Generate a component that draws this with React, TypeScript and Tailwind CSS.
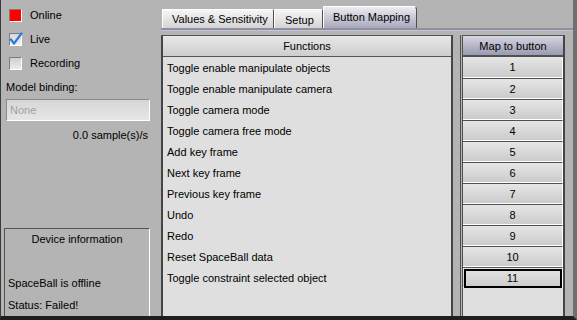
import React from "react";

const functions = [
  "Toggle enable manipulate objects",
  "Toggle enable manipulate camera",
  "Toggle camera mode",
  "Toggle camera free mode",
  "Add key frame",
  "Next key frame",
  "Previous key frame",
  "Undo",
  "Redo",
  "Reset SpaceBall data",
  "Toggle constraint selected object",
];

function Box({ children, className }: { children?: React.ReactNode; className: string }) {
  return (
    <div
      className={
        "w-[13px] h-[13px] shrink-0 border-t border-l border-t-[#7c7c7c] border-l-[#7c7c7c] border-b border-r border-b-white border-r-white flex items-center justify-center " +
        className
      }
    >
      {children}
    </div>
  );
}

export default function App() {
  return (
    <div className="w-[577px] h-[320px] bg-[#b4b4b4] flex border-l border-l-[#3a3a3a] border-b-[4px] border-b-[#1e1e1e] border-r-[4px] border-r-[#707070] font-['Liberation_Sans',Arial,sans-serif] text-[11px] text-black leading-[14px] overflow-hidden">
      {/* Left column */}
      <div className="w-[160px] shrink-0 flex flex-col">
        <div className="mt-[8px] h-[14px] flex items-center pl-[8px] gap-[8px]">
          <Box className="bg-[#ff0000]" />
          <span>Online</span>
        </div>
        <div className="mt-[10px] h-[14px] flex items-center pl-[8px] gap-[8px]">
          <Box className="bg-gradient-to-b from-[#d8d8d8] to-[#f2f2f2]">
            <svg width="13" height="13" viewBox="0 0 13 13" className="overflow-visible">
              <path d="M2 6.5 L5 10.5 L12.5 0.5" fill="none" stroke="#2f7ad8" strokeWidth="2.2" strokeLinecap="round" strokeLinejoin="round" />
            </svg>
          </Box>
          <span>Live</span>
        </div>
        <div className="mt-[10px] h-[14px] flex items-center pl-[8px] gap-[8px]">
          <Box className="bg-gradient-to-b from-[#cfcfcf] to-[#ececec]" />
          <span>Recording</span>
        </div>
        <div className="mt-[10px] h-[14px] pl-[5px]">Model binding:</div>
        <div className="mt-[5px] ml-[5px] w-[144px] h-[22px] border-t border-l border-t-[#8a8a8a] border-l-[#8a8a8a] border-b border-r border-b-white border-r-white bg-gradient-to-b from-[#d6d6d6] to-[#e6e6e6] flex items-center pl-[3px] text-[#a2a2a2]">
          None
        </div>
        <div className="mt-[7px] h-[14px] pr-[13px] text-right">0.0 sample(s)/s</div>
        <div className="mt-auto ml-[3px] w-[146px] h-[88px] border-t border-l border-t-[#555555] border-l-[#555555] border-r border-r-white flex flex-col">
          <div className="mt-[3px] h-[14px] text-center">Device information</div>
          <div className="mt-[30px] h-[14px] pl-[3px]">SpaceBall is offline</div>
          <div className="mt-[8px] h-[14px] pl-[3px]">Status: Failed!</div>
        </div>
      </div>

      {/* Right area */}
      <div className="flex-1 flex flex-col">
        {/* Tabs */}
        <div className="h-[28px] flex items-end pl-[1px]">
          <div className="w-[112px] h-[19px] border-t border-l border-t-white border-l-white border-r border-r-[#505050] rounded-tr-[2px] bg-gradient-to-b from-[#f6f6f6] to-[#d4d4d4] flex items-center pl-[9px]">
            Values &amp; Sensitivity
          </div>
          <div className="w-[49px] h-[19px] border-t border-l border-t-white border-l-white border-r border-r-[#505050] rounded-tr-[2px] bg-gradient-to-b from-[#f6f6f6] to-[#d4d4d4] flex items-center pl-[10px] pt-[1px]">
            Setup
          </div>
          <div className="w-[94px] h-[22px] border-t border-l border-t-white border-l-white border-r border-r-[#505050] rounded-tr-[4px] bg-gradient-to-b from-[#ececf0] to-[#a8a8bc] flex items-center pl-[9px] pb-[1px]">
            Button Mapping
          </div>
        </div>
        <div className="h-[2px] bg-[#8e8ea6]" />
        <div className="h-[1px] bg-[#c4c4cc]" />
        <div className="h-[4px]" />

        {/* Content */}
        <div className="flex-1 flex">
          {/* Functions table */}
          <div className="w-[292px] border-l-2 border-l-[#454545] border-r-2 border-r-[#454545] border-t border-t-[#555555] bg-[#dfdfdf] flex flex-col">
            <div className="h-[21px] bg-gradient-to-b from-[#e8e8e8] to-[#cdcdcd] border-b border-b-[#555555] flex items-center justify-center">
              Functions
            </div>
            {functions.map((f) => (
              <div key={f} className="h-[21px] flex items-center pl-[4px]">
                {f}
              </div>
            ))}
          </div>

          <div className="w-[7px]" />

          {/* Map to button table */}
          <div className="w-[105px] border-l border-l-[#505050] pl-[1px] flex">
            <div className="flex-1 border-l border-l-[#505050] border-r-2 border-r-[#454545] border-t border-t-[#555555] bg-[#dfdfdf] flex flex-col">
              <div className="h-[21px] bg-gradient-to-b from-[#d6d6e0] to-[#9a9ab2] border-b-2 border-b-[#505050] flex items-center justify-center">
                Map to button
              </div>
              {functions.map((f, i) => (
                <div
                  key={f}
                  className={
                    "h-[21px] bg-gradient-to-b from-[#e6e6e6] to-[#cbcbcb] border-b border-b-white border-r border-r-white flex items-center justify-center " +
                    (i === 0 ? "" : "border-t border-t-[#505050]")
                  }
                >
                  {i === 10 ? (
                    <div className="w-[98px] h-[19px] border-2 border-black flex items-center justify-center mt-[1px]">
                      {i + 1}
                    </div>
                  ) : (
                    <span>{i + 1}</span>
                  )}
                </div>
              ))}
            </div>
          </div>
        </div>
      </div>
    </div>
  );
}
